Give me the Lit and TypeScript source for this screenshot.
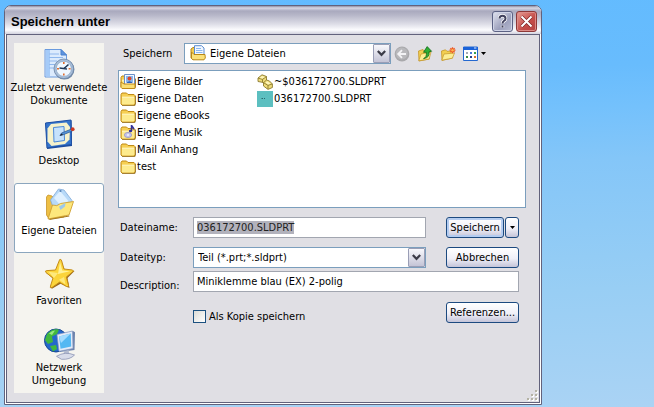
import { LitElement, html, svg, css, TemplateResult } from "lit";
import { customElement, property, state, query } from "lit/decorators.js";
import { classMap } from "lit/directives/class-map.js";

const folderShape = svg`
  <path d="M1 3.5 L2 2 H6.5 L8 3.5 H14 L15 4.5 V13 L14 14 H2 L1 13 Z" fill="#f6cf52" stroke="#c08a16"/>
  <path d="M2 6.5 H14.5 V12.5 L13.5 13.4 H2.4 L1.9 13 Z" fill="#fdeb8e"/>
  <path d="M2 6.2 H14.3" stroke="#fffbd2"/>
  <path d="M2 14.5 H15 L15.5 13.5 V5" fill="none" stroke="#8c6410" stroke-width=".7"/>`;

const smallIcons: Record<string, TemplateResult> = {
  folder: folderShape,
  pictures: svg`${folderShape}
    <path d="M4.5 .5 H14.5 V10.5 H4.5 Z" fill="#f4f8ff" stroke="#6a90c8"/>
    <path d="M6 2 H13 V8 H6 Z" fill="#88b8f0"/>
    <circle cx="9.5" cy="4.6" r="2" fill="#d8482c"/>
    <path d="M6 9 Q9.5 5.5 13 9 Z" fill="#2c60b8"/>
    <path d="M1 8 L4 10 H15 V13.5 L14 14.5 H2 L1 13.5 Z" fill="#fbdf74" stroke="#c08a16"/>`,
  music: svg`${folderShape}
    <ellipse cx="8" cy="10" rx="3.6" ry="2.6" fill="#c4c4ea" stroke="#8c8cc4" stroke-width=".7"/>
    <ellipse cx="8" cy="10" rx="1.2" ry=".8" fill="#fff"/>
    <path d="M11.5 6 V0 C12 2 14.3 2.4 13.6 4.6" fill="none" stroke="#303098" stroke-width="1.5"/>
    <ellipse cx="10.5" cy="6" rx="1.7" ry="1.2" fill="#303098"/>`,
  documents: svg`
    <path d="M1 4 L3 2.5 H6 V13 L3 14.5 L1 13 Z" fill="#f4cc50" stroke="#b98818"/>
    <path d="M4.5 .7 H11.5 L14 3 V11 H4.5 Z" fill="#f2f8ff" stroke="#5a8cd0"/>
    <path d="M6 3.5 H11 M6 5.5 H12.5 M6 7.5 H12.5" stroke="#8cb6ee"/>
    <path d="M1.5 7 L4 9.5 H15 L15.3 13 L14 14.8 H3 L1.5 13.5 Z" fill="#fbe17a" stroke="#b98818"/>`,
  part: svg`
    <path d="M1 4 L5 .8 L9.5 2.5 L9.5 6 L12.5 7 L15.4 10 V13.5 L11 15.4 L6.5 12 V8.5 L1 7.5 Z" fill="#eedb78" stroke="#8c7a30" stroke-width=".9"/>
    <path d="M1 4 L5.5 5.4 L9.5 2.5 M5.5 5.4 V8.5 M6.5 8.7 L11 11.4 L15.2 10 M11 11.4 V15 M6.5 8.7 L9.5 6" fill="none" stroke="#8c7a30" stroke-width=".9"/>
    <path d="M2.5 4 L5 2 L8 3 L5.5 4.5 Z M8.5 8.5 L10.5 7.3 L13.5 9.7 L11 10.5 Z" fill="#fff6bc"/>`,
  model: svg`<path d="M0 0 H16 V16 H0 Z" fill="#5cbfc0"/>
    <path d="M4.5 7.5 H6 M7 7.5 H8" stroke="#28686c"/>`,
  back: svg`<circle cx="8" cy="8" r="7.4" fill="#a9a9ac"/>
    <circle cx="7.8" cy="7.6" r="6" fill="#b9b9bc"/>
    <path d="M12 8 H4.5 M8 4.2 L4.2 8 L8 11.8" fill="none" stroke="#f3f3f5" stroke-width="1.8"/>`,
  up: svg`<path d="M1.5 5 L6 3.5 L7 5 L12.5 4.5 V13 L2 15 Z" fill="#f2cf50" stroke="#c4962a" stroke-width=".8"/>
    <path d="M1.8 14.8 L4 8 L14 6 L12.2 13 Z" fill="#fcee94" stroke="#c4962a" stroke-width=".7"/>
    <path d="M6.5 12.6 Q10 11.5 9.3 6.3 H6.5 L10.2 .6 L14.6 5.3 L12 5.8 Q13 11.8 6.5 12.6 Z" fill="#2fae34" stroke="#116a18" stroke-width=".8"/>`,
  create: svg`<path d="M1.5 5 L5.5 3.8 L7 5.3 L12.5 5 V12 L2 14.4 Z" fill="#f2cf50" stroke="#c4962a" stroke-width=".8"/>
    <path d="M1.8 14.2 L4 8 L14.5 7 L12.4 12.2 Z" fill="#fcee94" stroke="#c4962a" stroke-width=".7"/>
    <path d="M12.5 1.2 V7.2 M9.5 4.2 H15.5 M10.4 2.1 L14.6 6.3 M14.6 2.1 L10.4 6.3" stroke="#ee5a24" stroke-width="1.3"/>
    <circle cx="12.5" cy="4.2" r="1.2" fill="#ffb850"/>`,
  view: svg`<path d="M.5 1 H14.5 V14.5 H.5 Z" fill="#fff" stroke="#2468d0"/>
    <path d="M0 1 H15 V4 H0 Z" fill="#1a62d8"/><path d="M11 2 H13.4" stroke="#d8e8ff"/>
    <path d="M3 6 H5 V8 H3 Z" fill="#a4aab4"/><path d="M7 6 H9 V8 H7 Z" fill="#4a78d8"/>
    <path d="M11 6 H13 V8 H11 Z" fill="#38a04a"/><path d="M3 10 H5 V12 H3 Z" fill="#3c8c40"/>
    <path d="M7 10 H9 V12 H7 Z" fill="#24408c"/><path d="M11 10 H13 V12 H11 Z" fill="#d8702c"/>`,
};

const placeIcons: Record<string, TemplateResult> = {
  recent: svg`
    <path d="M2 1.5 H18 L23.5 7 V29 H2 Z" fill="#dcebfd" stroke="#6a9ade"/>
    <path d="M3 2 H7 V28.5 H3 Z" fill="#a5cbf8"/>
    <path d="M18 1.5 V7 H23.5 Z" fill="#5d94e0" stroke="#4a80cc"/>
    <path d="M6 6 H16 M6 9.5 H20 M6 13 H14 M6 16.5 H12 M6 20 H11" stroke="#8fb8ee" stroke-width="1.2"/>
    <circle cx="21.4" cy="21.6" r="10" fill="#6e86a4"/>
    <circle cx="20.8" cy="20.8" r="9.8" fill="#a8bed8" stroke="#7088a8" stroke-width=".8"/>
    <circle cx="20.8" cy="20.8" r="7.6" fill="#f0f8ff" stroke="#88a4c4" stroke-width=".7"/>
    <path d="M20.8 14 V16 M20.8 25.5 V27.5 M14 20.8 H16 M25.6 20.8 H27.6" stroke="#e06c30" stroke-width="1.6"/>
    <path d="M25.5 16.5 L20.5 21 M16.5 20 L24 21" stroke="#203858" stroke-width="1.6"/>`,
  desktop: svg`
    <path d="M2.5 5 L28.5 2.5 L29 28 L4 31 Z" fill="#1d4c9c"/>
    <path d="M2.5 5 L28 2 L28.5 26.5 L4 30 Z" fill="#3474cc" stroke="#1f50a4"/>
    <path d="M8 6 L23.5 4.5 L27 9 L26.5 21.5 L22 26 L8.5 28 L4.5 23.5 L4.5 10.5 Z" fill="#f6f2cc"/>
    <path d="M10.5 9.5 L21 8.5 L21.5 22.5 L11 24 Z" fill="#c6e2fc" stroke="#4a88d8"/>
    <path d="M17 17.5 L18.5 15 L28.5 11 L29.5 13 L19.5 17 Z" fill="#5494d8" stroke="#25508c" stroke-width=".7"/>
    <path d="M16.5 17.8 L19 15.5 L19.8 17 Z" fill="#222"/>
    <circle cx="29.7" cy="11.2" r="1.9" fill="#cc3a22"/>`,
  documents: svg`
    <path d="M3.5 9 L5 7 L9 8 L12 11 L27 13 L21 29 L6 31 L3.5 27 Z" fill="#eebf44" stroke="#c89428" stroke-width=".8"/>
    <path d="M7.5 12 L15.5 1 L21 2 L29 12.5 L22 22 H11 Z" fill="#b7d9f8" stroke="#80aad8" stroke-width=".8"/>
    <path d="M11 10 L17 3 L25.5 13 L18 18 Z" fill="#dff0ff"/><circle cx="17.5" cy="3" r="1.1" fill="#5884b8"/>
    <path d="M5 31 L9.5 17 Q14 19 17.5 15.5 L30.5 13.5 L26 27 Z" fill="#fde77c" stroke="#d0a030" stroke-width=".9"/>
    <path d="M16 18.5 L22.5 15 L22 18.5 L17.5 22 Z" fill="#9cc8ec"/>
    <path d="M6.5 31.5 L26.3 28" stroke="#a47820"/>`,
  favorites: svg`
    <path d="M17.8 3 L21.8 12 L31.5 13 L24.5 20 L26.5 30 L17.5 25.8 L8.5 31 L10.5 21 L3 14.5 L13 13 Z" fill="#96661a"/>
    <path d="M16.7 1.5 Q18 .6 18.7 3 L21 11 L29.5 12 Q31.3 12.8 29.5 14 L23.3 19 L25.5 27.5 Q25.5 29.5 23.5 28.5 L16.5 24.2 L9 29.5 Q6.5 30.5 7.5 28 L10 20 L3 14.6 Q1.4 12.8 4 12.6 L12.5 12 Z" fill="#fbd43a" stroke="#c58c18"/>
    <path d="M17 4 L19.3 12.5 L27 13.3 L15 16 Z" fill="#fff29a"/>
    <path d="M11 20 L15 15 L5.5 13.8 Z M16 21.8 L22.5 26.5 L21 19 Z" fill="#fff29a" opacity=".7"/>`,
  network: svg`
    <circle cx="13" cy="12.5" r="11.5" fill="#2468cc" stroke="#174896"/>
    <path d="M4 6 Q9 0 16 1.5 L14 6 L9 8.5 L10 14 L5 16 L2 12 Z M7 18 L13 17 L14 21 L10 23.6 Z" fill="#42b83e"/>
    <path d="M6 5.5 Q9 2.5 12 2.5 L9 7 Z" fill="#98e884"/>
    <path d="M14.5 7 L30 3 L32 4.2 L31.5 22 L16.5 24 Z" fill="#6c82ac"/>
    <path d="M14 6.5 L29.5 3 L30 20.5 L16 23.3 Z" fill="#e4ebf8" stroke="#8498c0" stroke-width=".7"/>
    <path d="M16 8.5 L27.8 5.5 L28.2 18.5 L17.5 20.8 Z" fill="#55b8f2"/>
    <path d="M16 8.5 L27.8 5.5 L18 15 Z" fill="#a4dcff"/>
    <path d="M21 23 L25.5 22 L26.5 26.5 L20.5 27 Z" fill="#b4bcd0"/>
    <path d="M13.5 28.3 Q22 23 31.5 27 Q27 31.8 18.5 31.3 Z" fill="#d8dcea" stroke="#8c94b4" stroke-width=".8"/>`,
};

@customElement("dialog-icon")
class DialogIcon extends LitElement {
  @property() name = "folder";
  static styles = css`
    :host { display: block; flex: none; }
    svg { display: block; }
  `;
  render() {
    const large = this.name.startsWith("place-");
    const size = large ? 32 : 16;
    const art = large ? placeIcons[this.name.slice(6)] : smallIcons[this.name];
    return html`<svg width=${size} height=${size} viewBox="0 0 ${size} ${size}" aria-hidden="true">${art}</svg>`;
  }
}

const places = [
  { icon: "recent", label: "Zuletzt verwendete\nDokumente" },
  { icon: "desktop", label: "Desktop" },
  { icon: "documents", label: "Eigene Dateien" },
  { icon: "favorites", label: "Favoriten" },
  { icon: "network", label: "Netzwerk\nUmgebung" },
];

const fileColumns = [
  [
    { icon: "pictures", label: "Eigene Bilder" },
    { icon: "folder", label: "Eigene Daten" },
    { icon: "folder", label: "Eigene eBooks" },
    { icon: "music", label: "Eigene Musik" },
    { icon: "folder", label: "Mail Anhang" },
    { icon: "folder", label: "test" },
  ],
  [
    { icon: "part", label: "~$036172700.SLDPRT" },
    { icon: "model", label: "036172700.SLDPRT" },
  ],
];

@customElement("app-root")
class AppRoot extends LitElement {
  @state() private place = "Eigene Dateien";
  @query("#filename") private filename!: HTMLInputElement;

  static styles = css`
    :host {
      display: block;
      box-sizing: border-box;
      min-height: 100vh;
      padding: 5px 112px 1px 4px;
      background: linear-gradient(178deg, #62bbff 0%, #68bcfd 20%, #74c1fc 30%, #84c6f8 42%, #98cef4 72%, #aad3f4 100%);
      font: 11px/13px "DejaVu Sans Condensed", "DejaVu Sans", sans-serif;
      color: #000;
    }
    * { box-sizing: border-box; }
    button, input, select { font: inherit; color: inherit; margin: 0; outline: none; border-radius: 0; }
    button { padding: 0; }
    .window {
      border: 1px solid #62627c;
      border-radius: 7px 7px 0 0;
      background: #fff;
      overflow: hidden;
    }
    .titlebar {
      display: flex;
      align-items: center;
      gap: 3px;
      height: 28px;
      padding: 3px 4px 0 6px;
      background: linear-gradient(#8e8ea4 0, #d8d8e4 2px, #a9a9be 5px, #b6b6c8 9px, #dddde7 18px, #fcfcfe 24px, #d2d2de 28px);
    }
    h1 { flex: 1; margin: 0; font: bold 13px/16px "Liberation Sans", sans-serif; }
    .caption {
      display: grid;
      place-items: center;
      width: 21px;
      height: 21px;
      border: 1px solid #5c6284;
      border-radius: 3px;
      background: linear-gradient(135deg, #e2e4f0, #9ca0bc 60%, #b8bcd2);
      box-shadow: inset 0 0 0 1px #d0d4e6;
    }
    .close {
      border-color: #8e3838;
      background: linear-gradient(135deg, #e89c94, #c44c48 60%, #b44444);
      box-shadow: inset 0 0 0 1px #dc8c88;
    }
    .client {
      display: flex;
      gap: 14px;
      margin: 0 1px 1px;
      padding: 8px 11px 9px 7px;
      border: 1px solid #62627c;
      background: #e0dfe4;
      position: relative;
    }
    .places { flex: none; width: 90px; background: #f5f4ef; }
    .place {
      display: flex;
      flex-direction: column;
      align-items: center;
      gap: 4px;
      width: 100%;
      height: 70px;
      padding: 4px 0 0;
      border: 1px solid transparent;
      background: none;
    }
    .place span { white-space: pre; }
    .place.tall { gap: 1px; }
    .place.current { border-color: #8ba6be; border-radius: 3px; background: #fff; }
    .main { flex: 1; min-width: 0; }
    .lookin { display: flex; align-items: center; padding: 0 42px 0 5px; height: 21px; }
    .lookin label { width: 61px; flex: none; }
    .combo { position: relative; display: block; flex: 1; min-width: 0; }
    select {
      appearance: none;
      display: block;
      width: 100%;
      height: 21px;
      padding: 0 20px 0 4px;
      border: 1px solid #7b9ebd;
      background: #fff;
    }
    .withicon select { padding-left: 25px; }
    .withicon dialog-icon { position: absolute; left: 6px; top: 2px; }
    .drop {
      position: absolute;
      right: 1px;
      top: 1px;
      display: grid;
      place-items: center;
      width: 17px;
      height: 19px;
      border: 1px solid #9a9eb6;
      border-radius: 1px;
      background: linear-gradient(#f8f8fc, #c4c4d6);
      pointer-events: none;
    }
    .tools { display: flex; align-items: center; gap: 7px; padding-left: 3px; }
    .tool { display: flex; align-items: center; gap: 2px; border: 0; background: none; }
    .files {
      display: flex;
      height: 138px;
      margin: 6px 2px 0 0;
      padding: 2px 1px 1px;
      border: 1px solid #7b9ebd;
      background: #fff;
    }
    ul { margin: 0; padding: 0; list-style: none; width: 137px; }
    li { display: flex; align-items: center; gap: 1px; height: 17px; white-space: nowrap; }
    .form {
      display: grid;
      grid-template-columns: 73px minmax(0, 1fr) 73px;
      grid-template-rows: 21px 27px 21px 28px;
      align-items: center;
      padding: 9px 9px 0 2px;
      row-gap: 3px;
    }
    .form .combo, .filename { margin-right: 20px; }
    .row2 { align-self: end; }
    label.row2 { padding-bottom: 4px; }
    label.low { padding-top: 8px; }
    .text { width: 100%; min-width: 0; height: 21px; padding: 0 3px; border: 1px solid #a2a6b0; background: #fff; }
    .filename { width: auto; }
    .text::selection { background: #b2b2bc; color: #222; }
    .wide { grid-column: 2 / 4; }
    .push {
      height: 21px;
      border: 1px solid #1c4a80;
      border-radius: 3px;
      background: linear-gradient(#fff, #f0f0f8 55%, #c4c4d8);
      white-space: nowrap;
    }
    .default { box-shadow: inset 0 0 0 2px #b4ccf0; }
    .split { display: grid; grid-template-columns: 58px 14px; gap: 1px; }
    .caret { display: grid; place-items: center; }
    .check { align-self: end; display: flex; align-items: center; gap: 3px; }
    .check input {
      appearance: none;
      width: 13px;
      height: 13px;
      border: 1px solid #1c5180;
      background: linear-gradient(135deg, #dcdcd6, #fff);
    }
    .bottom { align-self: end; }
    .grip { position: absolute; right: 1px; bottom: 1px; }
  `;

  firstUpdated() {
    this.filename.focus();
    this.filename.select();
  }

  private chevron() {
    return html`<span class="drop"><svg width="9" height="7" viewBox="0 0 9 7" aria-hidden="true">
      <path d="M.8 1 L4.5 4.8 L8.2 1" fill="none" stroke="#3c3c48" stroke-width="2.2"/></svg></span>`;
  }

  private caret() {
    return html`<svg width="5" height="3" viewBox="0 0 5 3" aria-hidden="true"><path d="M0 0 H5 L2.5 3 Z"/></svg>`;
  }

  render() {
    return html`
      <section class="window" aria-labelledby="title">
        <header class="titlebar">
          <h1 id="title">Speichern unter</h1>
          <button class="caption" aria-label="Hilfe">
            <svg width="13" height="15" viewBox="0 0 13 15">
              <path d="M3.5 4.5 Q3.6 1.8 6.5 1.8 T9.5 4.4 Q9.5 6 7.8 7 Q6.5 7.8 6.5 9.6 M6.5 11.4 V13.6" fill="none" stroke="#fff" stroke-width="3.4"/>
              <path d="M3.5 4.5 Q3.6 1.8 6.5 1.8 T9.5 4.4 Q9.5 6 7.8 7 Q6.5 7.8 6.5 9.6 M6.5 11.4 V13.4" fill="none" stroke="#40405c" stroke-width="2"/>
            </svg>
          </button>
          <button class="caption close" aria-label="Schließen">
            <svg width="13" height="13" viewBox="0 0 13 13">
              <path d="M1.5 1.5 L11.5 11.5 M11.5 1.5 L1.5 11.5" stroke="#7c2424" stroke-width="3.2"/>
              <path d="M1.5 1.5 L11.5 11.5 M11.5 1.5 L1.5 11.5" stroke="#fff" stroke-width="2"/>
            </svg>
          </button>
        </header>
        <div class="client">
          <nav class="places">
            ${places.map((p) => html`
              <button
                class=${classMap({ place: true, tall: p.label.includes("\n"), current: p.label === this.place })}
                @click=${() => (this.place = p.label)}
              >
                <dialog-icon name="place-${p.icon}"></dialog-icon><span>${p.label}</span>
              </button>`)}
          </nav>
          <div class="main">
            <div class="lookin">
              <label for="folder">Speichern</label>
              <span class="combo withicon">
                <select id="folder"><option>Eigene Dateien</option></select>
                <dialog-icon name="documents"></dialog-icon>${this.chevron()}
              </span>
              <div class="tools">
                <button class="tool" aria-label="Zurück"><dialog-icon name="back"></dialog-icon></button>
                <button class="tool" aria-label="Aufwärts"><dialog-icon name="up"></dialog-icon></button>
                <button class="tool" aria-label="Neuer Ordner"><dialog-icon name="create"></dialog-icon></button>
                <button class="tool" aria-label="Ansicht"><dialog-icon name="view"></dialog-icon>${this.caret()}</button>
              </div>
            </div>
            <div class="files">
              ${fileColumns.map((column) => html`<ul>
                ${column.map((f) => html`<li><dialog-icon name=${f.icon}></dialog-icon><span>${f.label}</span></li>`)}
              </ul>`)}
            </div>
            <div class="form">
              <label for="filename">Dateiname:</label>
              <input id="filename" class="text filename" value="036172700.SLDPRT" />
              <div class="split">
                <button class="push default">Speichern</button>
                <button class="push caret" aria-label="Weitere Optionen">${this.caret()}</button>
              </div>
              <label class="row2" for="filetype">Dateityp:</label>
              <span class="combo row2">
                <select id="filetype"><option>Teil (*.prt;*.sldprt)</option></select>${this.chevron()}
              </span>
              <button class="push row2">Abbrechen</button>
              <label class="low" for="description">Description:</label>
              <input id="description" class="text wide" value="Miniklemme blau (EX) 2-polig" />
              <span></span>
              <label class="check"><input type="checkbox" />Als Kopie speichern</label>
              <button class="push bottom">Referenzen...</button>
            </div>
          </div>
          <svg class="grip" width="12" height="12" viewBox="0 0 12 12" aria-hidden="true">
            <path d="M10 2 h2 v2 h-2z M6 6 h2 v2 h-2z M10 6 h2 v2 h-2z M2 10 h2 v2 h-2z M6 10 h2 v2 h-2z M10 10 h2 v2 h-2z" fill="#fff"/>
            <path d="M9 1 h2 v2 h-2z M5 5 h2 v2 h-2z M9 5 h2 v2 h-2z M1 9 h2 v2 h-2z M5 9 h2 v2 h-2z M9 9 h2 v2 h-2z" fill="#b4b2a4"/>
          </svg>
        </div>
      </section>`;
  }
}
